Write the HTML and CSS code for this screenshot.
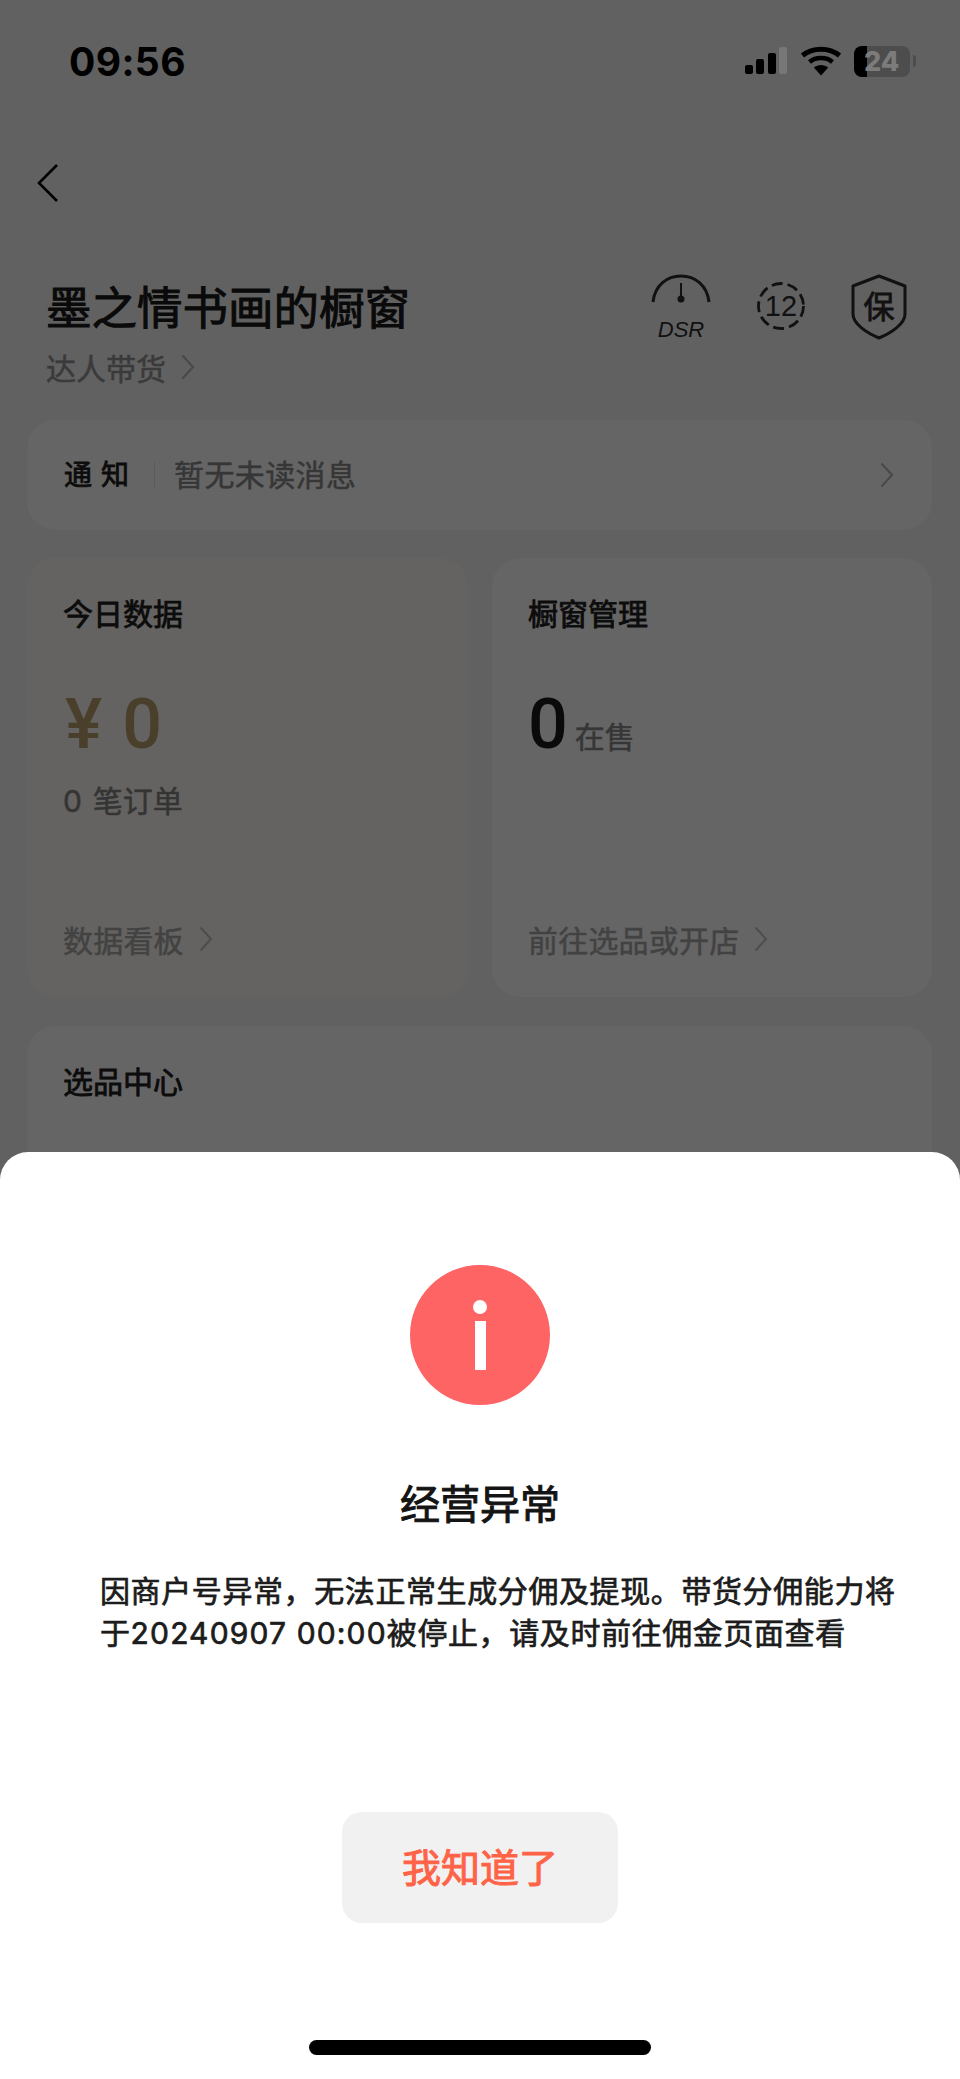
FILE: index.html
```html
<!DOCTYPE html>
<html lang="zh-CN">
<head>
<meta charset="utf-8">
<title>墨之情书画的橱窗</title>
<link rel="stylesheet" href="styles.css">
</head>
<body>
<div class="page">
  <header class="status">
    <span class="time">09:56</span>
    <div class="status-icons">
      <svg class="signal" width="44" height="30" viewBox="0 0 44 30">
        <rect x="0" y="19" width="8" height="9" rx="2" fill="#000"/>
        <rect x="11" y="13" width="8" height="15" rx="2" fill="#000"/>
        <rect x="23" y="7" width="8" height="21" rx="2" fill="#000"/>
        <rect x="34" y="1" width="8" height="27" rx="2" fill="#777"/>
      </svg>
      <svg class="wifi" width="40" height="30" viewBox="0 0 40 30">
        <path d="M1.500 9.500C11.500 1 28.500 1 38.500 9.500" fill="none" stroke="#000" stroke-width="5"/>
        <path d="M8.500 16C14.500 10.800 25.500 10.800 31.500 16" fill="none" stroke="#000" stroke-width="4.500"/>
        <path d="M12.800 21.500C17 18 23 18 27.200 21.500L20 29.500Z" fill="#000"/>
      </svg>
      <div class="battery">
        <span class="battery-fill"></span>
        <span class="battery-num">24</span>
      </div>
      <span class="battery-tip"></span>
    </div>
  </header>

  <nav class="nav">
    <svg width="22" height="40" viewBox="0 0 22 40">
      <path d="M20 2 2 20l18 18" fill="none" stroke="#000" stroke-width="2.600"/>
    </svg>
  </nav>

  <section class="head">
    <div class="head-text">
      <h1 class="shop">墨之情书画的橱窗</h1>
      <div class="role">达人带货
        <svg class="chev" width="14" height="26" viewBox="0 0 14 26"><path d="M1.500 1.500 12 13 1.500 24.500" fill="none" stroke="#484848" stroke-width="2"/></svg>
      </div>
    </div>
    <div class="badges">
      <svg width="60" height="74" viewBox="0 0 60 74">
        <path d="M2 28C4 11 16 2 30 2s26 9 28 26" fill="none" stroke="#111" stroke-width="3"/>
        <path d="M30 9v17" stroke="#111" stroke-width="2"/>
        <circle cx="30" cy="25" r="3.500" fill="#111"/>
        <text class="dsr" x="30" y="63" text-anchor="middle">DSR</text>
      </svg>
      <svg class="badge-year" width="50" height="50" viewBox="0 0 50 50">
        <circle cx="25" cy="25" r="22.500" fill="none" stroke="#111" stroke-width="2.800" stroke-dasharray="11 5"/>
        <text class="twelve" x="25" y="35" text-anchor="middle">12</text>
      </svg>
      <svg width="56" height="66" viewBox="0 0 56 66">
        <path d="M28 2 54 12V40C54 50 40 59 28 64 16 59 2 50 2 40V12Z" fill="none" stroke="#111" stroke-width="3" stroke-linejoin="round"/>
        <text class="bao" x="28" y="44" text-anchor="middle">保</text>
      </svg>
    </div>
  </section>

  <section class="notice card">
    <span class="notice-label">通知</span>
    <span class="notice-rule"></span>
    <span class="notice-text">暂无未读消息</span>
    <svg class="notice-chev" width="14" height="26" viewBox="0 0 14 26"><path d="M1.500 1.500 12 13 1.500 24.500" fill="none" stroke="#484848" stroke-width="2"/></svg>
  </section>

  <section class="duo">
    <article class="card panel panel-warm">
      <h2 class="panel-title">今日数据</h2>
      <div class="amount"><span class="yen">¥</span><span class="amount-num">0</span></div>
      <div class="orders"><span class="orders-num">0</span> 笔订单</div>
      <div class="panel-foot">数据看板
        <svg class="chev" width="14" height="26" viewBox="0 0 14 26"><path d="M1.500 1.500 12 13 1.500 24.500" fill="none" stroke="#4d4d4d" stroke-width="2"/></svg>
      </div>
    </article>
    <article class="card panel">
      <h2 class="panel-title">橱窗管理</h2>
      <div class="amount"><span class="count-num">0</span><span class="count-label">在售</span></div>
      <div class="panel-foot">前往选品或开店
        <svg class="chev" width="14" height="26" viewBox="0 0 14 26"><path d="M1.500 1.500 12 13 1.500 24.500" fill="none" stroke="#4d4d4d" stroke-width="2"/></svg>
      </div>
    </article>
  </section>

  <section class="card picks">
    <h2 class="panel-title">选品中心</h2>
  </section>

  <aside class="sheet">
    <div class="alert-icon"><span class="alert-dot"></span><span class="alert-stem"></span></div>
    <h3 class="sheet-title">经营异常</h3>
    <div class="sheet-body">
      <p class="sheet-line">因商户号异常，无法正常生成分佣及提现。带货分佣能力将</p>
      <p class="sheet-line"><span>于</span><span class="sheet-num">20240907 00:00</span><span>被停止，请及时前往佣金页面查看</span></p>
    </div>
    <button class="sheet-btn" type="button">我知道了</button>
    <span class="home-bar"></span>
  </aside>
</div>
</body>
</html>
```

FILE: styles.css
```css
* { box-sizing: border-box; }
html, body { margin: 0; padding: 0; }
body { font-family: "Noto Sans CJK SC", "Noto Sans", sans-serif; color: #111; }
h1, h2, h3, p { margin: 0; font-weight: 400; }

.page {
  position: relative;
  width: 960px;
  height: 2079px;
  overflow: hidden;
  background: #616161;
}

.status {
  height: 122px;
  padding: 0 44px 0 69px;
  display: flex;
  align-items: center;
  justify-content: space-between;
}
.time { font: 700 39px/1 "Inter", sans-serif; color: #000; letter-spacing: .4px; }
.status-icons { display: flex; align-items: center; }
.signal { margin-right: 12px; }
.wifi { margin-right: 13px; }
.battery {
  position: relative;
  width: 56px;
  height: 31px;
  border-radius: 8px;
  background: #4d4d4d;
  overflow: hidden;
}
.battery-fill { display: block; width: 13px; height: 100%; background: #000; }
.battery-num {
  position: absolute;
  left: 10px;
  top: 0;
  font: 800 27px/31px "Inter", sans-serif;
  color: #7c7c7c;
}
.battery-tip {
  width: 3px;
  height: 12px;
  margin-left: 3px;
  border-radius: 0 3px 3px 0;
  background: #4d4d4d;
}

.nav { height: 122px; padding-left: 37px; display: flex; align-items: center; }

.head {
  height: 145px;
  padding: 0 53px 0 46px;
  display: flex;
  justify-content: space-between;
  align-items: flex-start;
}
.shop {
  margin-top: 31px;
  font-size: 45.500px;
  line-height: 60px;
  color: #0a0a0a;
  -webkit-text-stroke: 1px #0a0a0a;
}
.role {
  margin-top: 12px;
  display: flex;
  align-items: center;
  font-size: 30px;
  line-height: 40px;
  color: #3a3a3a;
  -webkit-text-stroke: .5px #3a3a3a;
}
.chev { margin-left: 15px; }
.badges { margin-top: 30px; display: flex; align-items: flex-start; gap: 45px; }
.badge-year { margin-top: 7px; }
.dsr { font: italic 400 22px "Liberation Sans", sans-serif; fill: #111; }
.twelve { font: 400 29px "Liberation Sans", sans-serif; fill: #111; }
.bao { font: 400 31px "Noto Sans CJK SC", sans-serif; fill: #111; stroke: #111; stroke-width: .8px; }

.card { background: #656565; border-radius: 28px; }

.notice {
  margin: 31px 28px 0 27px;
  height: 110px;
  padding: 0 38px 0 37px;
  display: flex;
  align-items: center;
}
.notice-label {
  width: 74px;
  margin-bottom: 5px;
  font-size: 28px;
  line-height: 40px;
  letter-spacing: 9px;
  color: #0c0c0c;
  -webkit-text-stroke: .8px #0c0c0c;
}
.notice-rule { width: 1px; height: 27px; margin-left: 16px; margin-right: 19px; background: #5a5a5a; }
.notice-text {
  margin-bottom: 5px;
  font-size: 30px;
  line-height: 40px;
  letter-spacing: .4px;
  color: #363636;
  -webkit-text-stroke: .5px #363636;
}
.notice-chev { margin-left: auto; }

.duo {
  margin: 28px 28px 0 27px;
  height: 439px;
  display: grid;
  grid-template-columns: 441px 440px;
  gap: 24px;
}
.panel {
  padding: 34px 36px 38px;
  display: flex;
  flex-direction: column;
}
.panel-warm { background: #646361; }
.panel-title {
  font-size: 30px;
  line-height: 40px;
  color: #0c0c0c;
  -webkit-text-stroke: .8px #0c0c0c;
}
.amount {
  margin-top: 57px;
  height: 70px;
  display: flex;
  align-items: baseline;
  font: 500 70px/70px "Roboto", sans-serif;
}
.yen { color: #4a3f2a; font-size: 70px; margin-left: 2px; margin-right: 20px; }
.amount-num { color: #4a3f2a; }
.count-num { color: #0a0a0a; }
.count-label {
  margin-left: 7px;
  font: 400 30px/40px "Noto Sans CJK SC", sans-serif;
  color: #363636;
  -webkit-text-stroke: .5px #363636;
}
.orders {
  margin-top: 20px;
  font-size: 30px;
  line-height: 40px;
  color: #343434;
  -webkit-text-stroke: .5px #343434;
}
.orders-num { font-family: "Inter", sans-serif; margin-right: 4px; }
.panel-foot {
  margin-top: auto;
  display: flex;
  align-items: center;
  font-size: 30px;
  line-height: 40px;
  letter-spacing: .2px;
  color: #424242;
  -webkit-text-stroke: .5px #424242;
}
.picks { margin: 29px 28px 0 27px; height: 200px; padding: 34px 36px; }

.sheet {
  position: absolute;
  left: 0;
  right: 0;
  top: 1152px;
  bottom: 0;
  padding-top: 113px;
  background: #fff;
  border-radius: 28px 28px 0 0;
  display: flex;
  flex-direction: column;
  align-items: center;
}
.alert-icon {
  width: 140px;
  height: 140px;
  border-radius: 50%;
  background: #ff6464;
  display: flex;
  flex-direction: column;
  align-items: center;
  padding-top: 35px;
}
.alert-dot { width: 14px; height: 14px; border-radius: 50%; background: #fff; }
.alert-stem { width: 11px; height: 49px; margin-top: 7px; background: #fff; }
.sheet-title {
  margin-top: 70px;
  font-size: 40px;
  line-height: 54px;
  color: #141414;
  -webkit-text-stroke: 1px #141414;
}
.sheet-body {
  align-self: flex-start;
  width: 820px;
  margin: 41px 0 0 100px;
  font-family: "Inter", "Noto Sans CJK SC", sans-serif;
  font-size: 30px;
  line-height: 42px;
  letter-spacing: .6px;
  color: #1c1c1c;
  -webkit-text-stroke: .7px #1c1c1c;
}
.sheet-line { white-space: nowrap; }
.sheet-num { letter-spacing: 1.150px; }
.sheet-btn {
  margin-top: 158px;
  width: 276px;
  height: 111px;
  padding: 0 0 4px;
  border: 0;
  border-radius: 20px;
  background: #f1f1f1;
  font: 400 39px/1 "Noto Sans CJK SC", sans-serif;
  color: #ff6347;
  -webkit-text-stroke: 1px #ff6347;
}
.home-bar {
  position: absolute;
  left: 309px;
  bottom: 24px;
  width: 342px;
  height: 15px;
  border-radius: 8px;
  background: #000;
}
```
